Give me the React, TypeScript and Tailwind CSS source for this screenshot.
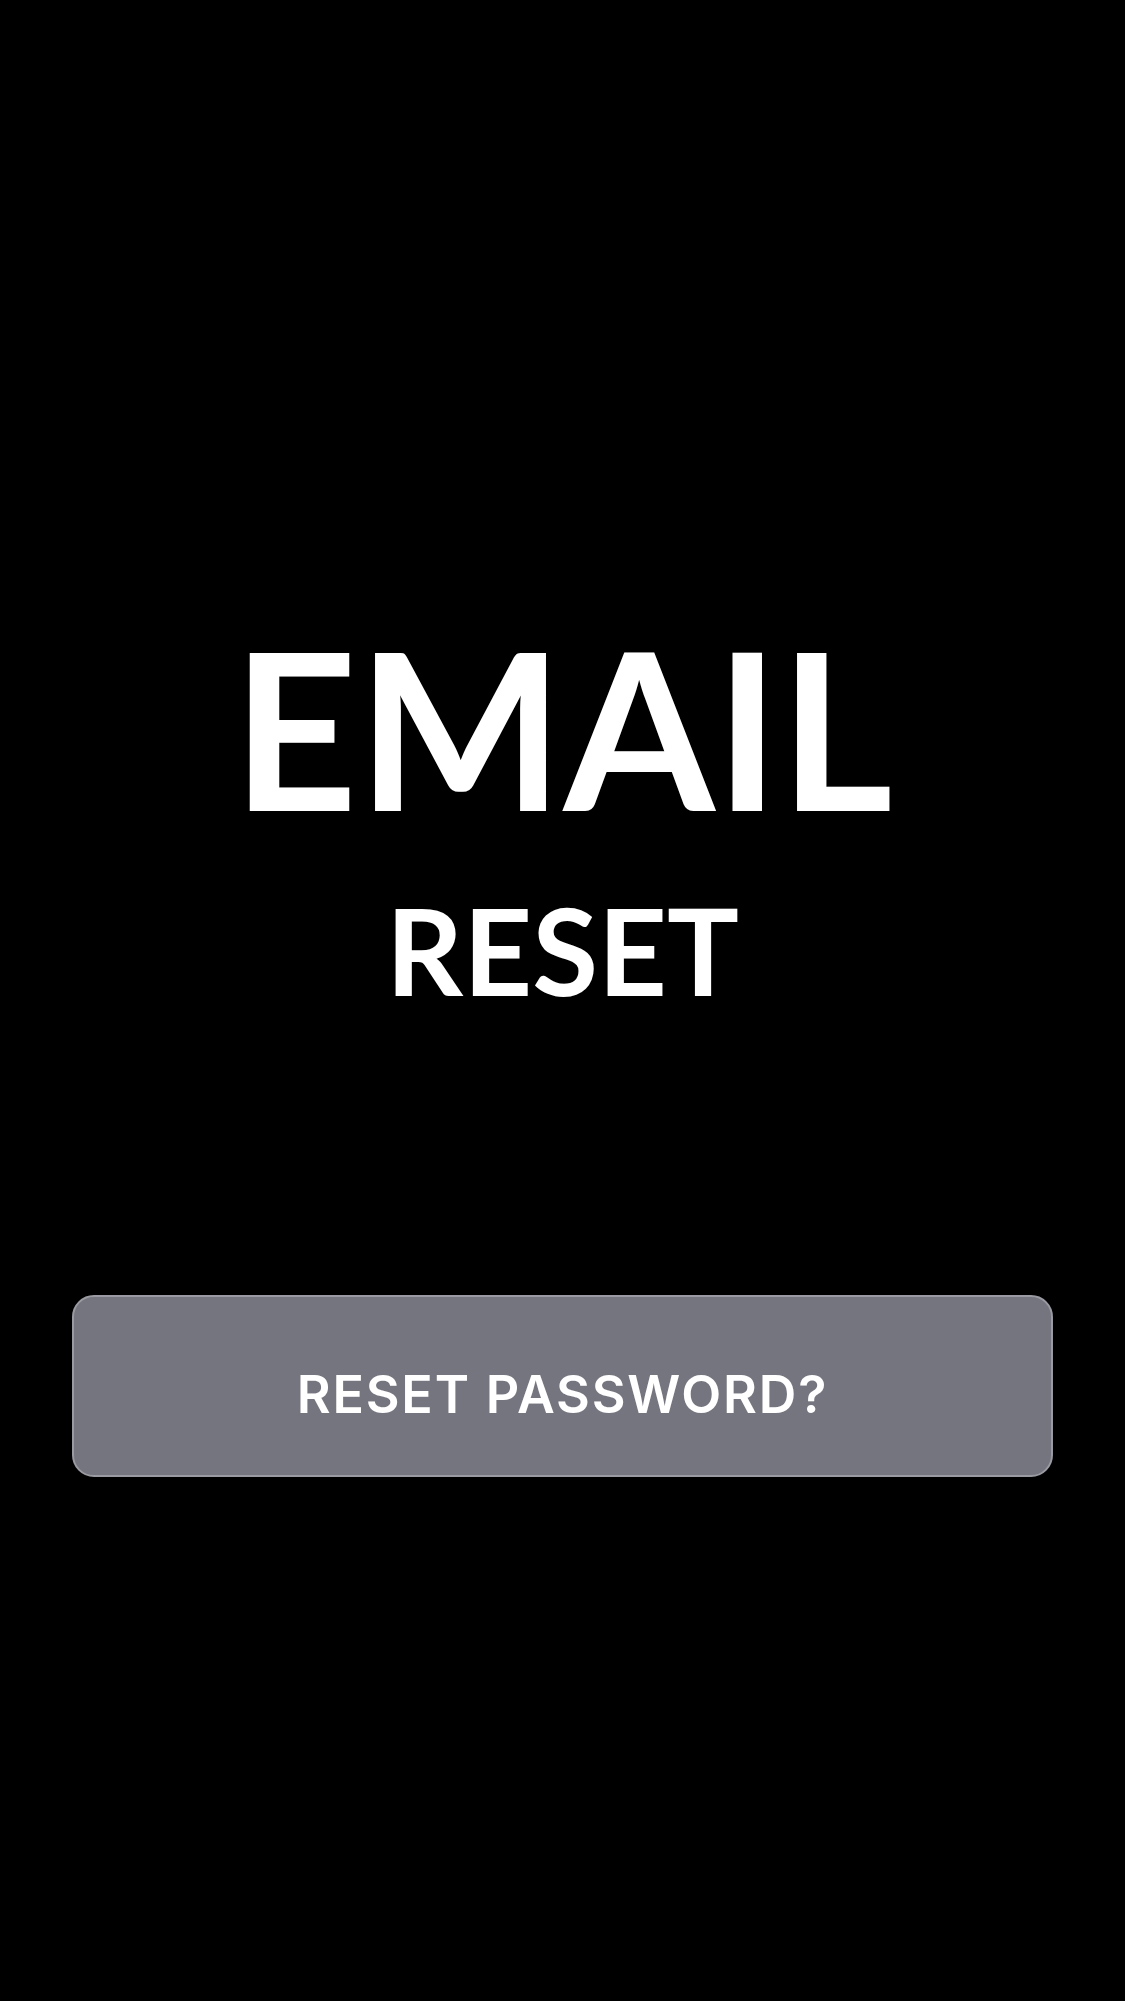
export default function App() {
  return (
    <main className="flex min-h-screen w-full flex-col items-center bg-black font-['Lato','Noto_Sans',sans-serif] text-white">
      <div className="mt-[618px] flex flex-col items-center">
        <h1 className="text-[218px] font-bold leading-none">EMAIL</h1>
        <h2 className="mt-[54px] text-[120px] font-bold leading-none">RESET</h2>
      </div>
      <div className="mt-[285px] w-full px-[72px]">
        <button className="flex h-[182px] w-full items-center justify-center rounded-[22px] border-2 border-[#9a9aa2] bg-[#75757f] pt-[17px] font-['Inter',sans-serif] text-[52px] font-semibold tracking-[0.035em] text-white">
          RESET PASSWORD?
        </button>
      </div>
    </main>
  );
}
